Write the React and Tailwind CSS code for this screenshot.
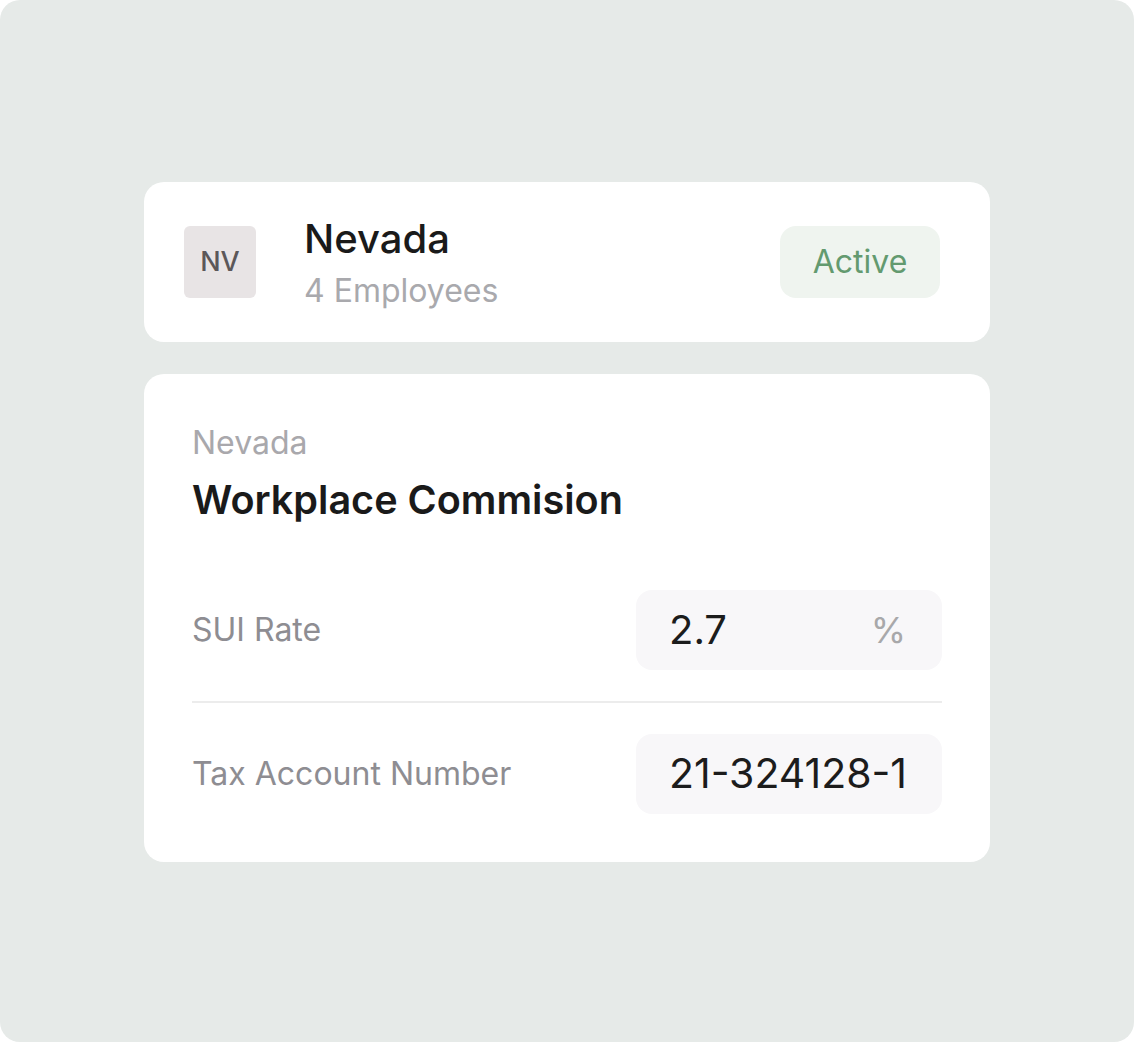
import React from "react";

export default function App() {
  return (
    <div className="w-[1134px] h-[1042px] bg-white" style={{ fontFamily: "Inter, 'Noto Sans', sans-serif" }}>
      <div className="w-full h-full rounded-[20px] bg-[#e6eae8] flex flex-col items-center pt-[182px]">
        <div className="w-[846px] flex flex-col gap-[32px]">
          {/* Card 1 */}
          <div className="h-[160px] bg-white rounded-[20px] flex items-center pl-[40px] pr-[50px]">
            <div className="w-[72px] h-[72px] rounded-[6px] bg-[#e8e4e5] flex items-center justify-center text-[27px] font-medium text-[#5b5759]">
              NV
            </div>
            <div className="ml-[48px] flex flex-col pt-[5px]">
              <div className="text-[40px] leading-[40px] font-medium text-[#1a1a1a]">Nevada</div>
              <div className="mt-[12px] text-[32px] leading-[40px] text-[#a9a9ad]">4 Employees</div>
            </div>
            <div className="ml-auto w-[160px] h-[72px] rounded-[16px] bg-[#eff4ef] flex items-center justify-center text-[32px] text-[#639a6f]">
              Active
            </div>
          </div>

          {/* Card 2 */}
          <div className="bg-white rounded-[20px] px-[48px] pt-[49px] pb-[48px] flex flex-col">
            <div className="text-[32px] leading-[40px] text-[#a9a8ac]">Nevada</div>
            <div className="mt-[13px] text-[39.6px] leading-[48px] font-semibold text-[#1a1a1a]">Workplace Commision</div>
            <div className="mt-[66px] flex items-center justify-between">
              <div className="text-[32px] text-[#8e8d92]">SUI Rate</div>
              <div className="w-[306px] h-[80px] rounded-[16px] bg-[#f8f7f9] flex items-center justify-between pl-[33px] pr-[36px]">
                <span className="text-[40px] text-[#1c1c1c]">2.7</span>
                <span className="text-[36px] text-[#a8a8aa]">%</span>
              </div>
            </div>
            <div className="my-[31px] h-[2px] bg-[#ececec]" />
            <div className="flex items-center justify-between">
              <div className="text-[32px] text-[#8e8d92]">Tax Account Number</div>
              <div className="w-[306px] h-[80px] rounded-[16px] bg-[#f8f7f9] flex items-center pl-[33px]">
                <span className="text-[41px] text-[#1c1c1c]">21-324128-1</span>
              </div>
            </div>
          </div>
        </div>
      </div>
    </div>
  );
}
